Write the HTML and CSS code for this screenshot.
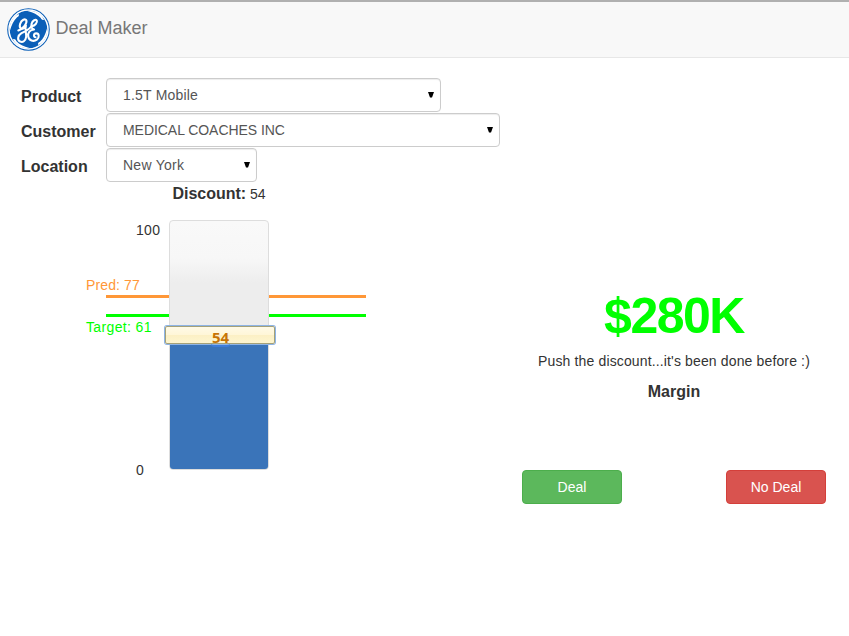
FILE: index.html
```html
<!DOCTYPE html>
<html lang="en">
<head>
<meta charset="utf-8">
<title>Deal Maker</title>
<link rel="stylesheet" href="styles.css">
</head>
<body>
<header class="navbar">
  <svg class="logo" viewBox="0 0 43 43" aria-label="GE">
    <circle cx="21.5" cy="21.5" r="21.3" fill="#0b5fb8"/>
    <circle cx="21.500" cy="21.500" r="19.500" fill="none" stroke="#fff" stroke-width="1.500"/>
    <g fill="#fff">
      <path d="M20.500 3C28 2 34.500 6 37 11.800c-1.400.6-2.900-.3-3.200-1.700C30.500 6.500 26.500 4.700 20.500 3z"/>
      <path d="M40 20.500C41 28 37 34.500 31.200 37c-.6-1.400.3-2.900 1.700-3.200 3.600-3.300 5.400-7.300 7.100-13.300z"/>
      <path d="M22.500 40C15 41 8.500 37 6 31.200c1.400-.6 2.900.3 3.200 1.700 3.300 3.600 7.300 5.400 13.300 7.100z"/>
      <path d="M3 22.500C2 15 6 8.500 11.800 6c.6 1.400-.3 2.900-1.700 3.200C6.500 12.500 4.700 16.500 3 22.500z"/>
    </g>
    <g transform="translate(-3.200 -1.100) scale(1.090)" fill="none" stroke="#fff" stroke-width="1.900" stroke-linecap="round" stroke-linejoin="round">
      <path d="M13.300 21.600C18 20 21.500 15 20.700 12.400c-.8-2.200-4.500-.4-5.700 3.100-1.300 4.200 1.500 6.300 4 3.300l1.300-1.800c-1.300 4 .6 7.500.2 10.500-.5 4-3.200 5.300-5.500 4.300-3-1.400-2.200-5.600 1.200-7.700 3.800-2.100 7.200-3.200 9.400-6.600"/>
      <path d="M25.700 17.800c2.900-.7 5.300-3.300 4.600-5.200-.8-1.700-4.100-.3-4.800 2.900-.6 2.800.3 4.700 2.300 5.200-3.800.3-6 3-5.400 6.300.6 4 4.900 5.300 7.900 3.100 2.700-2.100 2.100-5.900-.6-5.800-2.600.2-2.600 3.600-.6 3.600"/>
    </g>
  </svg>
  <span class="brand">Deal Maker</span>
</header>
<main class="page">
  <form class="form">
    <div class="row">
      <label class="title" for="product">Product</label>
      <div class="select product">
        <select id="product"><option>1.5T Mobile</option></select>
        <svg class="caret" viewBox="0 0 6 6"><path d="M0 0h6L4 5.500H2z"/></svg>
      </div>
    </div>
    <div class="row">
      <label class="title" for="customer">Customer</label>
      <div class="select customer">
        <select id="customer"><option>MEDICAL COACHES INC</option></select>
        <svg class="caret" viewBox="0 0 6 6"><path d="M0 0h6L4 5.500H2z"/></svg>
      </div>
    </div>
    <div class="row">
      <label class="title" for="location">Location</label>
      <div class="select location">
        <select id="location"><option>New York</option></select>
        <svg class="caret" viewBox="0 0 6 6"><path d="M0 0h6L4 5.500H2z"/></svg>
      </div>
    </div>
  </form>
  <div class="columns">
    <section class="discount">
      <div class="heading"><span class="title">Discount:</span> 54</div>
      <div class="chart">
        <div class="scale"><span>100</span><span>0</span></div>
        <div class="track">
          <div class="fill"></div>
          <div class="handle"><span>54</span></div>
        </div>
        <div class="marker pred"><span>Pred: 77</span></div>
        <div class="marker target"><span>Target: 61</span></div>
      </div>
    </section>
    <section class="margin">
      <div class="amount">$280K</div>
      <p class="hint">Push the discount...it's been done before :)</p>
      <div class="title">Margin</div>
      <div class="actions">
        <button class="btn deal" type="button">Deal</button>
        <button class="btn no-deal" type="button">No Deal</button>
      </div>
    </section>
  </div>
</main>
</body>
</html>
```
FILE: styles.css
```css
* { box-sizing: border-box; }
body {
  margin: 0;
  background: #fff;
  color: #333;
  font: 14px/20px "Liberation Sans", Arial, sans-serif;
  overflow: hidden;
}
.navbar {
  display: flex;
  align-items: flex-start;
  height: 58px;
  padding: 6px 7px 0;
  background: #f8f8f8;
  border-top: 2px solid #b0b0b0;
  border-bottom: 1px solid #e7e7e7;
}
.logo { width: 43px; height: 43px; }
.brand {
  margin: 10px 0 0 5.5px;
  color: #777;
  font-size: 18px;
}
.page { padding: 20px 0 0 21px; }
.form { display: flex; flex-direction: column; gap: 1px; }
.row { display: flex; align-items: center; height: 34px; }
.title { font-size: 16px; font-weight: bold; }
.row .title { width: 85px; padding-top: 4px; }
.select { position: relative; height: 34px; }
.select select {
  width: 100%;
  height: 34px;
  padding: 6px 16px;
  appearance: none;
  background: #fff;
  border: 1px solid #ccc;
  border-radius: 4px;
  box-shadow: inset 0 1px 1px rgba(0, 0, 0, .075);
  color: #555;
  font: inherit;
}
.product { width: 335px; letter-spacing: .2px; }
.customer { width: 394px; letter-spacing: -.05px; }
.location { width: 151px; letter-spacing: .25px; }
.select select { letter-spacing: inherit; }
.caret {
  position: absolute;
  top: 14px;
  right: 7px;
  width: 6px;
  height: 6px;
  fill: #000;
}
.columns { display: flex; }
.discount { width: 501px; }
.heading { width: 396px; margin-top: 2px; text-align: center; }
.chart {
  position: relative;
  display: flex;
  width: 345px;
  height: 250px;
  margin-top: 16px;
}
.scale {
  display: flex;
  flex-direction: column;
  justify-content: space-between;
  width: 148px;
  height: 260px;
  padding-left: 115px;
  letter-spacing: .3px;
}
.track {
  position: relative;
  z-index: 1;
  display: flex;
  align-items: flex-end;
  width: 100px;
  height: 250px;
  background: linear-gradient(#f9f9f9, #f7f7f7 15%, #ededed 25%, #ededed);
  border: 1px solid #ddd;
  border-radius: 4px;
}
.fill {
  width: 100%;
  height: 134px;
  background: #3a74b9;
  border-radius: 0 0 3px 3px;
}
.handle {
  position: absolute;
  left: -5px;
  top: 105px;
  width: 110px;
  height: 18px;
  background: linear-gradient(#fffae7, #fff6d8 48%, #fcf0c5 52%, #fdf5cf);
  border: 1px solid #a4a179;
  border-radius: 2px;
  box-shadow: 0 0 0 1px #8eb4e5;
  color: #c77405;
  font: bold 15px/20px "Open Sans", sans-serif;
  text-align: center;
}
.handle span {
  display: block;
  width: 19px;
  height: 20px;
  margin-left: 45px;
  border-bottom: 2px solid #3d7cda;
  border-radius: 0 0 3px 3px;
}
.marker {
  position: absolute;
  left: 85px;
  width: 260px;
  height: 3px;
  background: currentColor;
}
.marker span { position: absolute; left: -20px; white-space: nowrap; }
.pred { top: 75px; color: #ff9737; }
.pred span { top: -20px; letter-spacing: .12px; }
.target { top: 94px; color: #0f0; }
.target span { top: 3px; letter-spacing: .36px; }
.margin {
  width: 304px;
  padding-top: 102px;
  text-align: center;
}
.amount {
  color: #0f0;
  font-size: 50px;
  font-weight: bold;
  line-height: 64px;
  letter-spacing: -1.5px;
}
.hint { margin: 3px 0 11px; letter-spacing: .14px; }
.actions { display: flex; justify-content: space-between; margin-top: 68px; }
.btn {
  width: 100px;
  height: 34px;
  padding: 6px 12px;
  border: 1px solid;
  border-radius: 4px;
  color: #fff;
  font: inherit;
}
.deal { background: #5cb85c; border-color: #4cae4c; }
.no-deal { background: #d9534f; border-color: #d43f3a; }
```
